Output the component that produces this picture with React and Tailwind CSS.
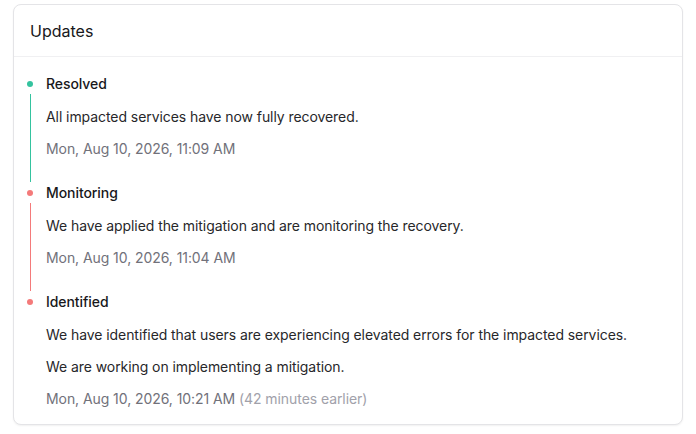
const updates = [
  {
    status: "Resolved",
    color: "bg-[#34c39f]",
    lines: ["All impacted services have now fully recovered."],
    time: "Mon, Aug 10, 2026, 11:09 AM",
  },
  {
    status: "Monitoring",
    color: "bg-[#f47a7a]",
    lines: ["We have applied the mitigation and are monitoring the recovery."],
    time: "Mon, Aug 10, 2026, 11:04 AM",
  },
  {
    status: "Identified",
    color: "bg-[#f47a7a]",
    lines: [
      "We have identified that users are experiencing elevated errors for the impacted services.",
      "We are working on implementing a mitigation.",
    ],
    time: "Mon, Aug 10, 2026, 10:21 AM",
    note: "(42 minutes earlier)",
  },
];

export default function App() {
  return (
    <div className="min-h-screen bg-white px-[13px] pt-[4px] font-['Inter',sans-serif]">
      <div className="rounded-lg border border-[#e4e4e7] bg-white shadow-[0_1px_2px_rgba(0,0,0,0.06)]">
        {/* Header */}
        <div className="flex h-[52px] items-center border-b border-[#f0f0f2] px-4">
          <h2 className="text-base text-[#18181b]">Updates</h2>
        </div>

        {/* Timeline */}
        <ul className="px-4 pt-[17px] pb-[15px]">
          {updates.map((u, i) => {
            const last = i === updates.length - 1;
            return (
              <li key={u.status} className="flex gap-[13px]">
                <div className="-ml-[3px] flex w-[6px] flex-col items-center">
                  <div className="flex h-5 items-center">
                    <span className={`h-[6px] w-[6px] rounded-full ${u.color}`} />
                  </div>
                  {!last && <div className={`mb-px w-px flex-1 ${u.color}`} />}
                </div>
                <div
                  className={`flex flex-col gap-3 text-sm leading-5 tracking-[-0.07px] ${
                    last ? "" : "pb-6"
                  }`}
                >
                  <p className="mb-px font-medium text-[#18181b]">{u.status}</p>
                  {u.lines.map((l) => (
                    <p key={l} className="text-[#27272a]">{l}</p>
                  ))}
                  <p className="text-[#71717a]">
                    {u.time}
                    {u.note && <span className="text-[#a1a1aa]"> {u.note}</span>}
                  </p>
                </div>
              </li>
            );
          })}
        </ul>
      </div>
    </div>
  );
}
